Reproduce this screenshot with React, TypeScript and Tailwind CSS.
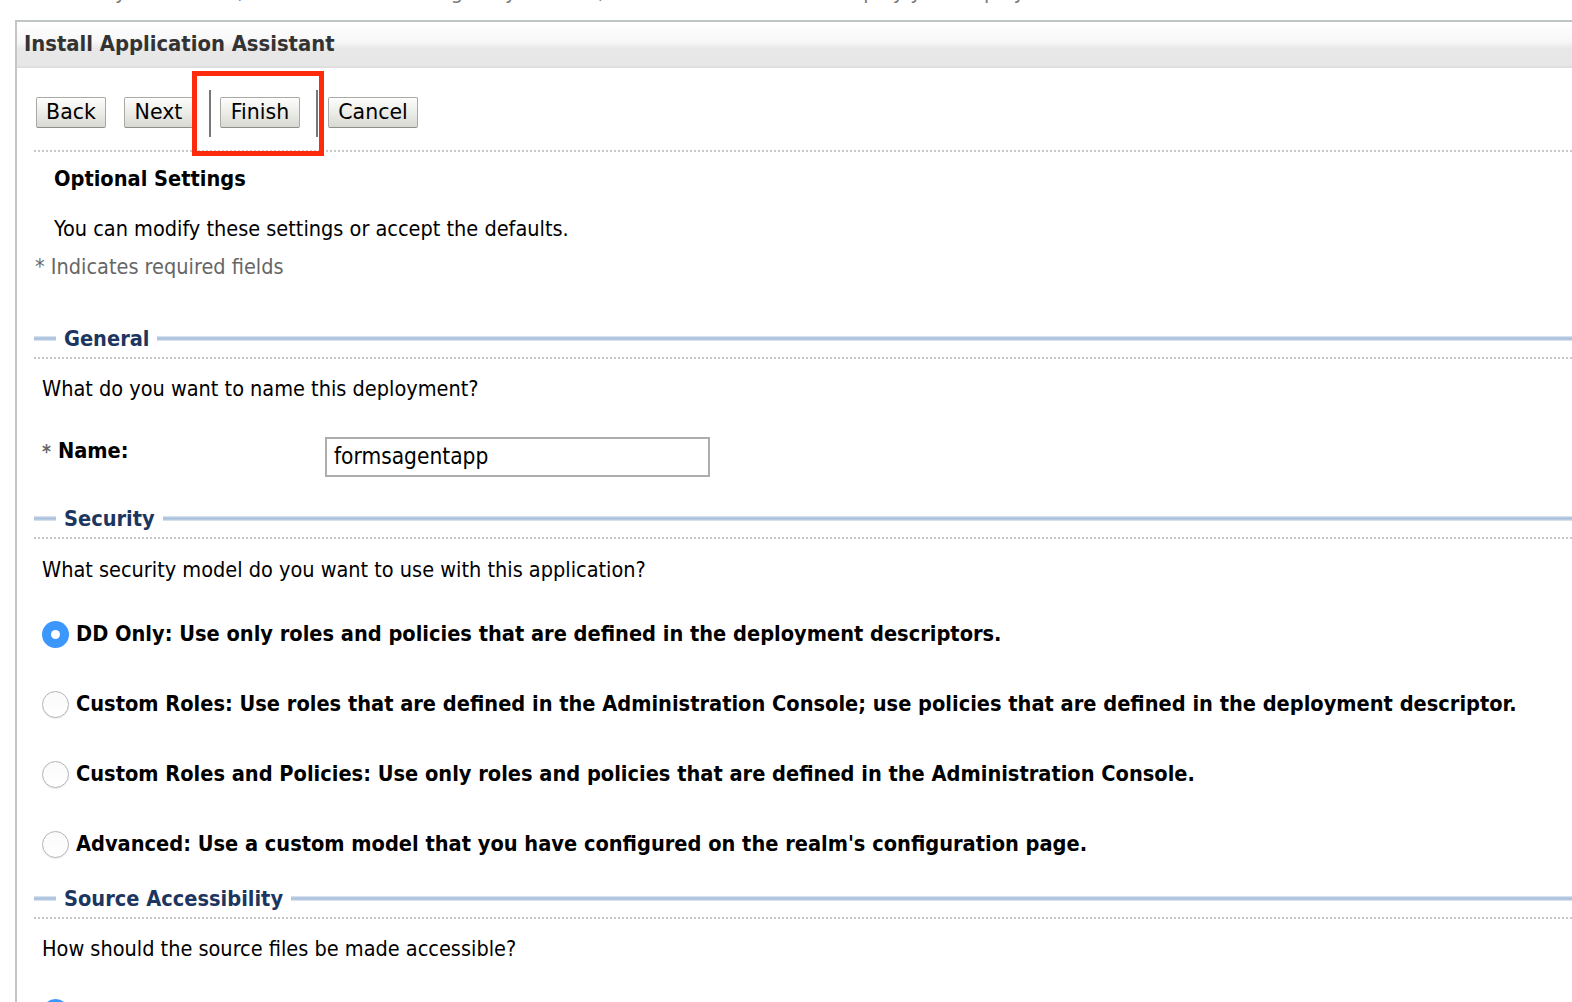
import clsx from 'clsx'

const BODY = "font-['DejaVu_Sans_Condensed','Liberation_Sans',sans-serif]"
const DOTTED =
  'h-[2px] bg-[image:repeating-linear-gradient(to_right,#c8c8c8_0px,#c8c8c8_2px,transparent_2px,transparent_4px)]'
const RULE =
  'h-[5px] bg-[image:linear-gradient(to_bottom,#e4ebf3,#a9c0dd_40%,#a9c0dd_60%,#e4ebf3)]'

function WizardButton({ label, className }: { label: string; className?: string }) {
  return (
    <button
      type="button"
      className={clsx(
        "flex h-[31px] items-center justify-center rounded-[2px] border border-[#a9a9a6] border-b-[#8e8e8b] bg-[image:linear-gradient(to_bottom,#fdfdfc,#ecece8_50%,#d9d9d3)] font-['DejaVu_Sans',sans-serif] text-[20.5px] text-black shadow-[inset_0_1px_0_#fff]",
        className,
      )}
    >
      {label}
    </button>
  )
}

function Divider() {
  return <div className="h-[47px] w-[2px] bg-[#777]" />
}

function SectionHeader({ title }: { title: string }) {
  return (
    <>
      <div className="flex h-[38px] items-center">
        <div className={clsx(RULE, 'w-[22px]')} />
        <span className="px-[8px] pt-[3px] text-[21.6px] font-bold text-[#1d365f]">{title}</span>
        <div className={clsx(RULE, 'flex-1')} />
      </div>
      <div className={DOTTED} />
    </>
  )
}

function Radio({ checked }: { checked?: boolean }) {
  if (checked) {
    return (
      <span className="flex h-[27px] w-[27px] shrink-0 items-center justify-center rounded-full bg-[#3b97fb]">
        <span className="h-[9px] w-[9px] rounded-full bg-white" />
      </span>
    )
  }
  return (
    <span className="h-[27px] w-[27px] shrink-0 rounded-full border border-[#b4b4b4] bg-[image:linear-gradient(to_bottom,#fafafa,#ffffff)] shadow-[0_1px_1px_rgba(0,0,0,0.08)]" />
  )
}

function RadioRow({
  label,
  checked,
  className,
  labelClassName,
}: {
  label: string
  checked?: boolean
  className?: string
  labelClassName?: string
}) {
  return (
    <div className={clsx('flex h-[70px] items-center gap-[7px] pl-[8px]', className)}>
      <Radio checked={checked} />
      <span className={clsx('text-[21.6px] font-bold text-black', labelClassName)}>{label}</span>
    </div>
  )
}

const securityModels = [
  { label: 'DD Only: Use only roles and policies that are defined in the deployment descriptors.', checked: true },
  {
    label:
      'Custom Roles: Use roles that are defined in the Administration Console; use policies that are defined in the deployment descriptor.',
  },
  { label: 'Custom Roles and Policies: Use only roles and policies that are defined in the Administration Console.' },
  { label: "Advanced: Use a custom model that you have configured on the realm's configuration page." },
]

export default function App() {
  return (
    <div className={clsx('relative h-[1002px] w-full overflow-hidden bg-white text-black', BODY)}>
      {/* instructions line scrolled mostly out of view */}
      <div className="h-[20px] overflow-hidden">
        <p className="-mt-[19px] whitespace-nowrap pl-[40px] text-[21.5px] leading-[22px] text-[#7a7a7a]">
          Review your choices, or click Back to change any of them, and then click Finish to deploy your deployments.
        </p>
      </div>

      <div className="ml-[15px] border-l-2 border-[#c4c6c6]">
        <div className="flex h-[48px] items-center border-t-2 border-b-2 border-t-[#bfc5c5] border-b-[#dedede] bg-[image:linear-gradient(to_bottom,#ffffff,#f7f7f7_45%,#e7e8e7_60%,#e6e7e6)] pl-[7px]">
          <h1 className="text-[21.8px] font-bold text-[#333]">Install Application Assistant</h1>
        </div>

        <div className="pl-[17px]">
          <div className="flex items-start pt-[22px]">
            <WizardButton label="Back" className="ml-[2px] mt-[7px] w-[70px]" />
            <WizardButton label="Next" className="ml-[18px] mt-[7px] w-[69px]" />
            <div className="ml-[16px]">
              <Divider />
            </div>
            <WizardButton label="Finish" className="ml-[9px] mt-[7px] w-[80px]" />
            <div className="ml-[16px]">
              <Divider />
            </div>
            <WizardButton label="Cancel" className="ml-[10px] mt-[7px] w-[90px]" />
          </div>
          <div className={clsx(DOTTED, 'mt-[13px]')} />

          <div className="flex h-[50px] items-center pl-[20px] pt-[4px] text-[21.6px] font-bold">Optional Settings</div>
          <div className="flex h-[50px] items-center pl-[20px] pt-[4px] text-[21.5px]">
            You can modify these settings or accept the defaults.
          </div>
          <div className="flex h-[26px] items-center pl-[1px] pt-[4px] text-[21.5px] text-[#666]">
            * Indicates required fields
          </div>

          <div className="mt-[41px]">
            <SectionHeader title="General" />
          </div>
          <div className="flex h-[58px] items-center pl-[8px] pt-[2px] text-[21.5px]">
            What do you want to name this deployment?
          </div>
          <div className="flex items-start pl-[8px] pt-[20px]">
            <label className="mt-[1px] flex w-[283px] items-center leading-[26px]">
              <span className="text-[19px] font-bold text-[#666]">*</span>
              <span className="ml-[7px] text-[21.6px] font-bold">Name:</span>
            </label>
            <div className="flex h-[40px] w-[385px] items-center border-2 border-[#adadad] bg-white pl-[7px] text-[22.5px]">
              formsagentapp
            </div>
          </div>

          <div className="mt-[22px]">
            <SectionHeader title="Security" />
          </div>
          <div className="flex h-[60px] items-center pl-[8px] pt-[2px] text-[21.5px]">
            What security model do you want to use with this application?
          </div>
          {securityModels.map((m) => (
            <RadioRow key={m.label} label={m.label} checked={m.checked} />
          ))}

          <SectionHeader title="Source Accessibility" />
          <div className="flex h-[58px] items-center pl-[8px] pt-[2px] text-[21.5px]">
            How should the source files be made accessible?
          </div>
          <RadioRow
            label="Use the defaults defined by the deployment's targets"
            checked
            labelClassName="pt-[8px]"
          />
        </div>
      </div>

      {/* red highlight drawn around the Finish button */}
      <div className="pointer-events-none absolute left-[192px] top-[71px] h-[85px] w-[132px] border-[5px] border-[#fe2a0c]" />
    </div>
  )
}
